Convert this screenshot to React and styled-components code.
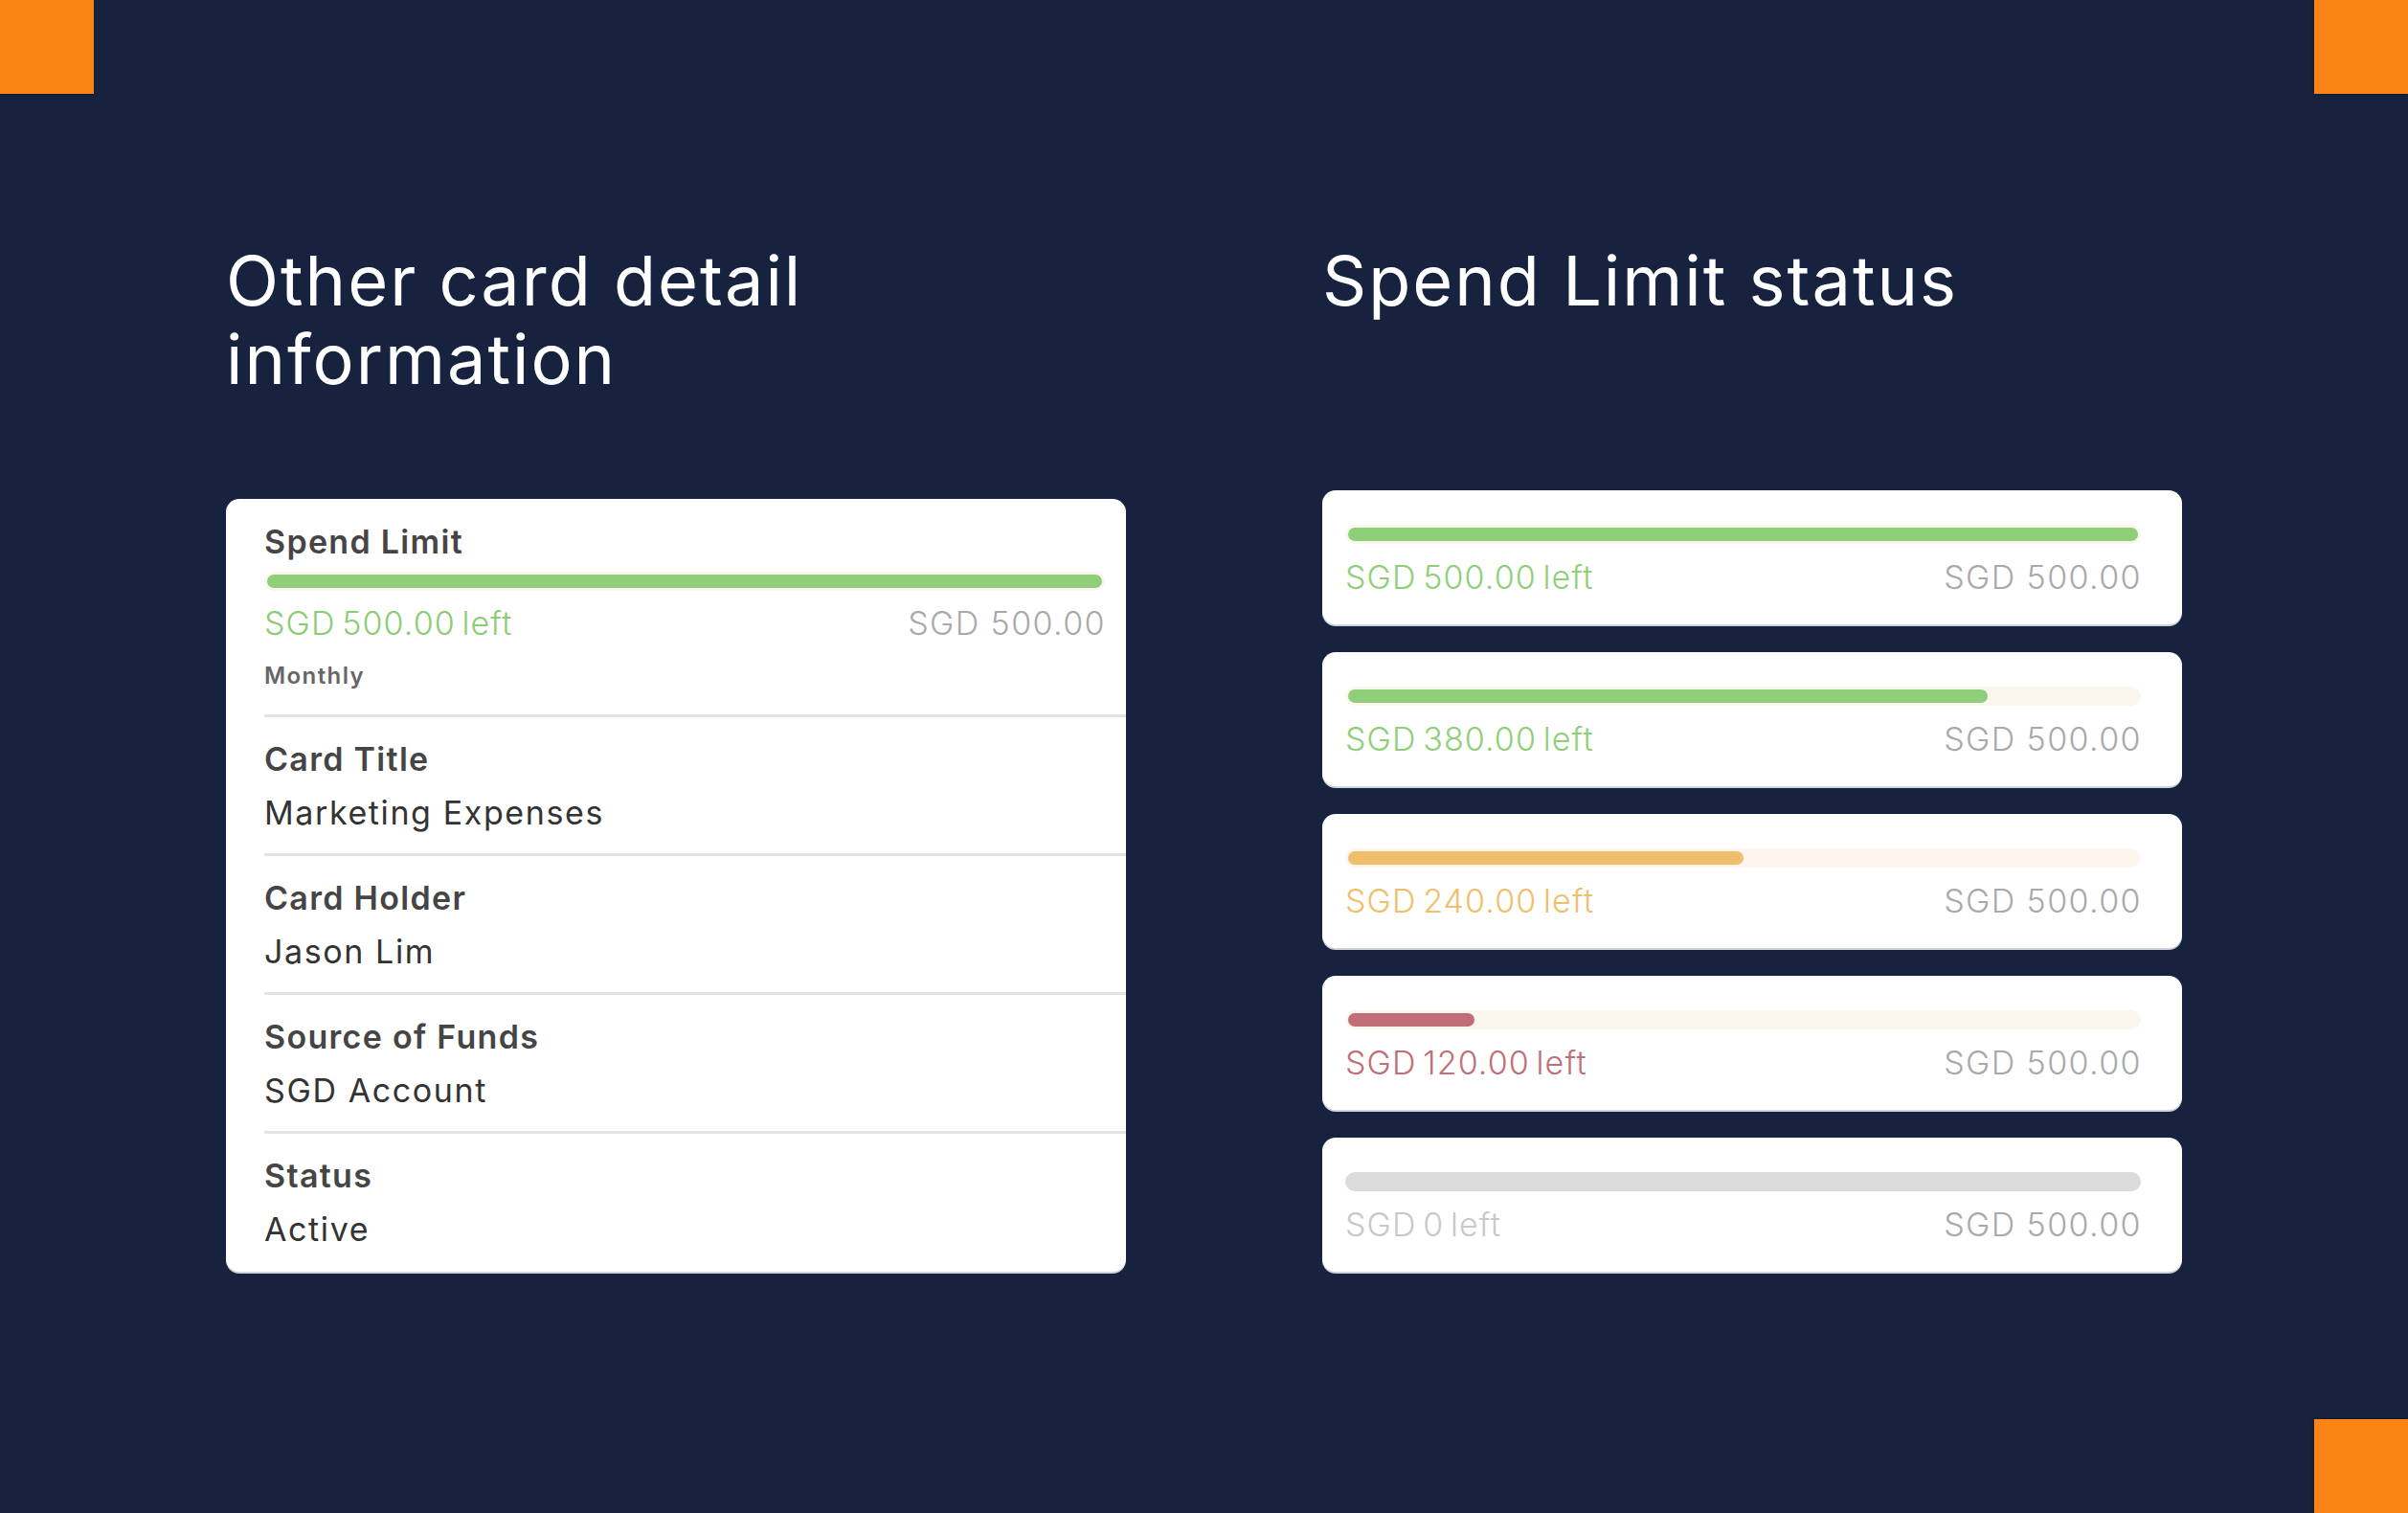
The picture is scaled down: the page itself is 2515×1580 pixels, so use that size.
import React from "react";
import styled, { createGlobalStyle } from "styled-components";

const Global = createGlobalStyle`
  html, body { margin: 0; padding: 0; background: #16223e; }
  body { font-family: Inter, "Noto Sans", sans-serif; }
`;

const Page = styled.div`
  position: relative;
  width: 2515px;
  height: 1580px;
  box-sizing: border-box;
  padding: 252px 0 0 236px;
  background: #16223e;
  overflow: hidden;
`;

const Corner = styled.div`
  position: absolute;
  width: 98px;
  height: 98px;
  background: #fb8414;
  box-shadow: 0 0 2px rgba(0, 0, 0, 0.5);
  ${(p) => (p.$top ? "top: 0;" : "bottom: 0;")}
  ${(p) => (p.$left ? "left: 0;" : "right: 0;")}
`;

const Layout = styled.div`
  display: grid;
  grid-template-columns: 940px 898px;
  grid-template-rows: 260px 816px;
  column-gap: 205px;
`;

const Heading = styled.h1`
  margin: 0;
  font-family: Inter, sans-serif;
  font-weight: 400;
  font-size: 72px;
  line-height: 82px;
  color: #ffffff;
  letter-spacing: 2px;
`;

const DetailCard = styled.div`
  align-self: end;
  background: #fff;
  border-radius: 14px;
  box-shadow: 0 2px 0 #cfd3da;
  padding-left: 40px;
  height: 807px;
  box-sizing: border-box;
  display: flex;
  flex-direction: column;
`;

const Row = styled.div`
  display: flex;
  flex-direction: column;
  padding: ${(p) => (p.$first ? "25px 22px 26px 0" : "24px 22px 21px 0")};
  border-bottom: ${(p) => (p.$last ? "none" : "3px solid #e3e3e3")};
`;

const Label = styled.div`
  font-size: 34px;
  line-height: 40px;
  font-weight: 600;
  color: #454545;
  letter-spacing: 1.3px;
`;

const Value = styled.div`
  margin-top: 15px;
  font-size: 34px;
  line-height: 42px;
  font-weight: 400;
  color: #333;
  letter-spacing: 1.6px;
`;

const Track = styled.div`
  height: 20px;
  box-sizing: border-box;
  padding: 3px 3px;
  border-radius: 10px;
  background: ${(p) => p.$bg || "#fdf6ef"};
  margin-top: ${(p) => p.$mt || 0}px;
`;

const Fill = styled.div`
  height: 14px;
  border-radius: 7px;
  background: ${(p) => p.$color};
`;

const Amounts = styled.div`
  display: flex;
  justify-content: space-between;
  align-items: baseline;
  margin-top: ${(p) => p.$mt}px;
  font-size: 34px;
  line-height: 42px;
  font-weight: 300;
`;

const Left = styled.span`
  color: ${(p) => p.$color};
  letter-spacing: 1.1px;
  word-spacing: -4px;
`;

const Total = styled.span`
  color: #a9a9a9;
  letter-spacing: 1.4px;
  margin-right: -1px;
`;

const Period = styled.div`
  margin-top: 20px;
  font-size: 24px;
  line-height: 28px;
  font-weight: 600;
  color: #666;
  letter-spacing: 1.4px;
`;

const Stack = styled.div`
  align-self: end;
  display: flex;
  flex-direction: column;
  gap: 29px;
`;

const LimitCard = styled.div`
  height: 140px;
  box-sizing: border-box;
  background: #fff;
  border-radius: 14px;
  box-shadow: 0 2px 0 #cfd3da;
  padding: 36px 43px 0 24px;
`;

const SpendBar = ({ pct, color, track, mt }) => (
  <Track $bg={track} $mt={mt}>
    {pct > 0 && <Fill $color={color} style={{ width: `${pct}%` }} />}
  </Track>
);

const statuses = [
  { left: "SGD 500.00 left", pct: 100, color: "#8fcf79" },
  { left: "SGD 380.00 left", pct: 81, color: "#8fcf79" },
  { left: "SGD 240.00 left", pct: 50, color: "#efbf6c" },
  { left: "SGD 120.00 left", pct: 16, color: "#c06e78" },
  { left: "SGD 0 left", pct: 0, color: "#c8c8c8", track: "#dbdbdb" },
];

const details = [
  ["Card Title", "Marketing Expenses"],
  ["Card Holder", "Jason Lim"],
  ["Source of Funds", "SGD Account"],
  ["Status", "Active"],
];

export default function App() {
  return (
    <Page>
      <Global />
      <Corner $top $left />
      <Corner $top />
      <Corner />
      <Layout>
        <Heading>
          Other card detail
          <br />
          information
        </Heading>
        <Heading>Spend Limit status</Heading>
        <DetailCard>
          <Row $first>
            <Label>Spend Limit</Label>
            <SpendBar pct={100} color="#8fcf79" mt={11} />
            <Amounts $mt={13}>
              <Left $color="#8dcc77">SGD 500.00 left</Left>
              <Total>SGD 500.00</Total>
            </Amounts>
            <Period>Monthly</Period>
          </Row>
          {details.map(([l, v], i) => (
            <Row key={l} $last={i === details.length - 1}>
              <Label>{l}</Label>
              <Value>{v}</Value>
            </Row>
          ))}
        </DetailCard>
        <Stack>
          {statuses.map((s) => (
            <LimitCard key={s.left}>
              <SpendBar pct={s.pct} color={s.color} track={s.track} />
              <Amounts $mt={14}>
                <Left $color={s.color}>{s.left}</Left>
                <Total>SGD 500.00</Total>
              </Amounts>
            </LimitCard>
          ))}
        </Stack>
      </Layout>
    </Page>
  );
}
